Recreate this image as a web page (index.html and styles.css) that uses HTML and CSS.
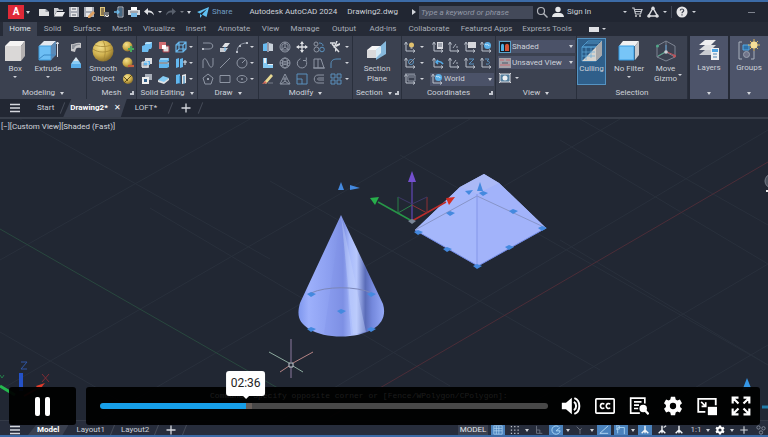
FILE: index.html
```html
<!DOCTYPE html>
<html lang="en">
<head>
<meta charset="utf-8">
<title>Autodesk AutoCAD 2024</title>
<link rel="stylesheet" href="styles.css">
</head>
<body>
<svg class="sprite" aria-hidden="true">
  <defs>
    <linearGradient id="coneFill" x1="0" x2="1" y1="0" y2="0">
      <stop offset="0" stop-color="#7f97ee"/><stop offset=".12" stop-color="#9db0fb"/><stop offset=".36" stop-color="#8c9ff0"/><stop offset=".52" stop-color="#7c8fe2"/><stop offset=".6" stop-color="#a9bbfb"/><stop offset=".68" stop-color="#b7c7fc"/><stop offset=".78" stop-color="#5a6cb8"/><stop offset=".86" stop-color="#7488dc"/><stop offset="1" stop-color="#94a8f6"/>
    </linearGradient>
    <radialGradient id="gold" cx=".38" cy=".3" r=".75"><stop offset="0" stop-color="#f3e08c"/><stop offset=".55" stop-color="#d0b14e"/><stop offset="1" stop-color="#856a26"/></radialGradient>
  </defs>
  <symbol id="menu" viewBox="0 0 12 12"><path d="M1 2.500h10M1 6h10M1 9.500h10" stroke="#d5d8de" stroke-width="1.300"/></symbol>
  <symbol id="plus" viewBox="0 0 12 12"><path d="M1.500 6h9M6 1.500v9" stroke="#d5d8de" stroke-width="1.300"/></symbol>
  <symbol id="new" viewBox="0 0 12 12"><path d="M1 3h6.500L11 6v4H1z" fill="#dedfe1"/><path d="M7.500 3v3H11" fill="#9b9fa8"/></symbol>
  <symbol id="open" viewBox="0 0 12 12"><path d="M1 10V2h4l1 1.500h4V5H4z" fill="#c9cbd0"/><path d="M3.500 6H12l-2.500 4.500H1z" fill="#eeeef0"/></symbol>
  <symbol id="save" viewBox="0 0 12 12"><path d="M1 1h10v10H1z" fill="#a9adb7"/><path d="M3 1h6v4H3zM3 7h6v4H3z" fill="#e5e5e7"/><path d="M4 3h4M4 9h4" stroke="#555b67"/></symbol>
  <symbol id="saveas" viewBox="0 0 12 12"><path d="M1 1h10v10H1z" fill="#a9adb7"/><path d="M3 1h6v4H3zM3 7h4v4H3z" fill="#e5e5e7"/><path d="m5 10 5-5 2 2-5 5H5z" fill="#e0a163"/></symbol>
  <symbol id="webopen" viewBox="0 0 12 12"><path d="M2 1h5v9H2z" fill="#dfc57a"/><path d="M3 2h3v7H3z" fill="#8b7750"/><path d="M6 6h5v5H6z" fill="#75777b"/><path d="m7 9 2 2 2-2" stroke="#eee" fill="none"/></symbol>
  <symbol id="websave" viewBox="0 0 12 12"><path d="M5 1h5v10H5z" fill="none" stroke="#b5c1d0"/><path d="M6 2h3v8H6z" fill="#486985"/><path d="M1 6h5M4 4l2 2-2 2" stroke="#6db8e6" fill="none" stroke-width="1.300"/></symbol>
  <symbol id="print" viewBox="0 0 12 12"><path d="M3 1h6v3H3z" fill="#fff"/><path d="M0 4h12v5H0z" fill="#d4d8dd"/><path d="M3 7h6v4H3z" fill="#79b9e6"/><path d="M2 6h8" stroke="#6c737f"/></symbol>
  <symbol id="undo" viewBox="0 0 12 12"><path d="M5 2 1 5.500l4 3.500V6.500c3 0 4 .5 6 3C10.500 5.500 8 4.500 5 4.500z" fill="#dfe1e5"/></symbol>
  <symbol id="redo" viewBox="0 0 12 12"><path d="m7 2 4 3.500L7 9V6.500c-3 0-4 .5-6 3C1.500 5.500 4 4.500 7 4.500z" fill="#59606d"/></symbol>
  <symbol id="send" viewBox="0 0 12 12"><path d="M12 1 0 6l3 1.500L10 3 5 8.500l4.500 2.500zM3 8v4l2-2.500z" fill="#5fc0f3"/></symbol>
  <symbol id="search" viewBox="0 0 12 12"><circle cx="5" cy="5" r="3.500" fill="none" stroke="#b2b5bc" stroke-width="1.200"/><path d="m7.500 7.500 4 4" stroke="#b2b5bc" stroke-width="1.400"/></symbol>
  <symbol id="user" viewBox="0 0 12 12"><circle cx="6" cy="3.500" r="2.700" fill="#e6e7e9"/><path d="M0 11c.5-3 2-4 4-4h4c2 0 3.500 1 4 4z" fill="#e6e7e9"/></symbol>
  <symbol id="cart" viewBox="0 0 12 12"><path d="M1 2h2l1.500 6h5L11 3.500H3.500M4 5.500h6.500" fill="none" stroke="#c1c4ca" stroke-width="1.200"/><circle cx="5" cy="10" r="1" fill="#ccc"/><circle cx="9" cy="10" r="1" fill="#ccc"/></symbol>
  <symbol id="apps" viewBox="0 0 12 12"><path d="M6 2 1.500 10h9z" fill="none" stroke="#dcdde0" stroke-width="1.500"/><circle cx="6" cy="2.200" r="1.700" fill="#dcdde0"/><circle cx="2" cy="10" r="1.700" fill="#dcdde0"/><circle cx="10" cy="10" r="1.700" fill="#dcdde0"/></symbol>
  <symbol id="help" viewBox="0 0 12 12"><circle cx="6" cy="6" r="5.500" fill="#e6e6e8"/><path d="M4.300 4.500c0-2 3.400-2 3.400 0 0 1.300-1.700 1.200-1.700 2.700M6 8.300v1.200" fill="none" stroke="#3f4552" stroke-width="1.200"/></symbol>

  <symbol id="box" viewBox="0 0 22 22"><path d="M1 6 6 1h15l-4 5z" fill="#f5f4f3"/><path d="M1 6h16v15H1z" fill="#dad8d7"/><path d="m17 6 4-5v15l-4 5z" fill="#b4b1b1"/></symbol>
  <symbol id="extrude" viewBox="0 0 22 22"><path d="m2 6 5-5h12l-5 5z" fill="#e4e8ee"/><path d="M2 6h12v14H2z" fill="#6dbef4" stroke="#429edc"/><path d="m14 6 5-5v14l-5 5z" fill="#5c8ab6"/><path d="m2 19 5-4h11" fill="none" stroke="#3c88c4"/><path d="M20.500 2v15M19 4l1.500-2L22 4" fill="none" stroke="#e1e3e8"/></symbol>
  <symbol id="surf" viewBox="0 0 12 12"><path d="M1 3c3 1 4-2 10-1v5c-5-1-5 0-6 4L1 10z" fill="#c8c8ca"/><path d="M2 4c3 0 4-2 8-1v1C6 4 5 5 4 8H2z" fill="#8f939c"/></symbol>
  <symbol id="press" viewBox="0 0 12 12"><path d="m6 0 3 4H7v3H5V4H3z" fill="#d9e5ed"/><path d="M1 7h10v4H1z" fill="#5aaeea"/><path d="m1 7 2-3h6l2 3z" fill="#8bcdf6"/></symbol>
  <symbol id="sphere" viewBox="0 0 22 22"><circle cx="11" cy="11" r="10.500" fill="url(#gold)"/><path d="M1 9c5 4 14 4 20 0M11 1c3 4 3 15 0 20M3 5c4 2 12 2 16 0" fill="none" stroke="#a48735" stroke-width=".8"/></symbol>
  <symbol id="ballplus" viewBox="0 0 12 12"><circle cx="5.500" cy="5.500" r="5" fill="url(#gold)"/><path d="M9 5v6M6 8h6" stroke="#47a75c" stroke-width="2"/></symbol>
  <symbol id="ballminus" viewBox="0 0 12 12"><circle cx="5.500" cy="5.500" r="5" fill="url(#gold)"/><path d="M6 9h6" stroke="#c45f3e" stroke-width="2.200"/></symbol>
  <symbol id="ballrefine" viewBox="0 0 12 12"><circle cx="6" cy="6" r="5" fill="url(#gold)"/><path d="m2 10 8-8M2 4l4 4" stroke="#61501c"/></symbol>

  <symbol id="union" viewBox="0 0 12 12"><path d="M1 5 4 4V2l2-1h5v5l-1 2H8l-1 3H1z" fill="#6dbcf0"/><path d="m4 2 2-1h5l-2 2H4z" fill="#b8e0f8"/></symbol>
  <symbol id="subtract" viewBox="0 0 12 12"><path d="M1 1h7v7H1z" fill="#cf6b70"/><path d="M5 5h6v6H5z" fill="#ddd" stroke="#a63b45"/><path d="M4 4h4v4H4z" fill="#fff"/></symbol>
  <symbol id="wirebox" viewBox="0 0 12 12"><path d="m1 4 3-3h7v7l-3 3H1zM1 4h7v7M8 4l3-3M4 1v7L1 11M4 8h7" fill="none" stroke="#69b7ec" stroke-width="1.200"/></symbol>
  <symbol id="intersect" viewBox="0 0 12 12"><path d="M4 1h7v6H4z" fill="#dedfe2"/><path d="M1 5h7v6H1z" fill="#a9b1bd"/><path d="M3 4h6v4H3z" fill="#62b5ed"/><path d="M1 5h6v5H1z" fill="none" stroke="#eee"/></symbol>
  <symbol id="slice" viewBox="0 0 12 12"><path d="m1 3 2-2h8v3l-2 1H1zM1 7h8l2-1v4l-2 1H1z" fill="#61b5ed"/><path d="M2 2h8M1 6h10" stroke="#deeff8"/></symbol>
  <symbol id="thicken" viewBox="0 0 12 12"><path d="M1 2 4 1v9l-3 1zM5 2l3-1v9l-3 1z" fill="#64b8ef"/><path d="M8 5h4M10 3v5" stroke="#dae7ef"/></symbol>
  <symbol id="interfere" viewBox="0 0 12 12"><path d="M4 1h7v6H4z" fill="#a8afba"/><path d="M1 4h7v7H1z" fill="#eee"/><path d="M3 6h3v3H3z" fill="#315f8a"/></symbol>
  <symbol id="offface" viewBox="0 0 12 12"><path d="m0 7 5-4 6 2-5 5z" fill="#85cbf4"/><path d="m0 7 6 2 5-4v2l-5 4-6-2z" fill="#e2e4e6"/></symbol>
  <symbol id="separate" viewBox="0 0 12 12"><path d="m1 2 4-1v9l-4 1z" fill="#62b7ee"/><path d="m7 2 4-1v9l-4 1z" fill="#e2e4e6"/><path d="M5 3v8M9 3v8" stroke="#247cb8"/></symbol>

  <symbol id="pline" viewBox="0 0 12 12"><path d="M1 2h6c5 0 5 6 0 6H1" class="ln"/><path d="M0 7h2v2H0z" fill="#b8bdc7"/></symbol>
  <symbol id="face" viewBox="0 0 12 12"><path d="m3 6 3-4h5L8 6z" fill="#dfe0e3"/><path d="M1 7h8l-3 4H1z" fill="#c7cad0"/><path d="M6 6v4" stroke="#66b8ef"/></symbol>
  <symbol id="arc" viewBox="0 0 12 12"><path d="M1 11C1 5 5 2 11 2" class="ln"/><path d="M0 10h2v2H0zM10 1h2v2h-2zM3 4h2v2H3z" fill="#b8bdc7"/></symbol>
  <symbol id="spline" viewBox="0 0 12 12"><path d="M1 11V4c0-3 3-3 4 0l2 4c1 3 4 3 4-1V1" class="ln"/></symbol>
  <symbol id="line" viewBox="0 0 12 12"><path d="M1 11 11 1" class="ln"/></symbol>
  <symbol id="circle" viewBox="0 0 12 12"><circle cx="6" cy="6" r="5" class="ln"/><path d="m6 6 3-3" class="ln"/></symbol>
  <symbol id="polygon" viewBox="0 0 12 12"><path d="m6 1 5 4-2 6H3L1 5z" class="ln"/><path d="M5 5h2v2H5z" fill="#9aa1ae"/></symbol>
  <symbol id="rect" viewBox="0 0 12 12"><path d="M1 2.500h10v7H1z" class="ln"/></symbol>
  <symbol id="ellipse" viewBox="0 0 12 12"><ellipse cx="6" cy="6" rx="5" ry="3.500" class="ln"/><path d="M5.500 5.500h1v1h-1z" class="ln"/></symbol>

  <symbol id="mirror3d" viewBox="0 0 12 12"><path d="m1 3 4-1v8H1z" fill="#68bbf1"/><path d="m7 2 4 1v7H7z" fill="#c9d1da"/><path d="M6 1v10" stroke="#eef"/></symbol>
  <symbol id="gizmo" viewBox="0 0 12 12"><circle cx="6" cy="6" r="5" class="ln"/><path d="M6 1v5l-4 3M6 6l4 3M3 4l3-2 3 2v5H3z" class="ln"/></symbol>
  <symbol id="move" viewBox="0 0 12 12"><path d="M6 1v10M1 6h10" stroke="#dfe1e5" stroke-width="1.300"/><path d="m6 0 2 3H4zM6 12l2-3H4zM0 6l3-2v4zM12 6 9 4v4z" fill="#dfe1e5"/></symbol>
  <symbol id="copy" viewBox="0 0 12 12"><circle cx="3" cy="3" r="2" class="ln"/><circle cx="3.500" cy="8.500" r="2.500" class="ln"/><path d="M6 2c3 0 4 1 4 3" class="lb"/><circle cx="9" cy="8.500" r="2.300" class="lb"/></symbol>
  <symbol id="trim" viewBox="0 0 12 12"><path d="M0 2h5M7 0 4 7M2 3l7 8" stroke="#dcdee2" stroke-width="1.500" fill="none"/><path d="m5 4 5-2v2L6 6zM5 7v4l2-2z" fill="#dcdee2"/></symbol>
  <symbol id="bracket" viewBox="0 0 12 12"><path d="M1 1h4v6h6v4H1z" fill="#83c8f2"/><path d="M2 1h2v5H2zM6 7h5v1H6z" fill="#e9eff4"/></symbol>
  <symbol id="rot3d" viewBox="0 0 12 12"><circle cx="6" cy="6" r="5" class="ln"/><ellipse cx="6" cy="6" rx="2.500" ry="5" class="ln"/><path d="M1 6h10M2 3c3 2 5 2 8 0M2 9c3-2 5-2 8 0" class="ln"/></symbol>
  <symbol id="rotate" viewBox="0 0 12 12"><path d="M4.500 1.800a4.700 4.700 0 1 0 5.500 2" class="ln"/><path d="M7 3.500h3.300V.5" class="ln"/></symbol>
  <symbol id="stretch" viewBox="0 0 12 12"><path d="M1 2h4v9H1zM5 2h3l3 9H5M0 11h12" class="ln"/></symbol>
  <symbol id="fillet" viewBox="0 0 12 12"><path d="M1 11V7c0-4 3-5 6-5h4" class="lb"/></symbol>
  <symbol id="erase" viewBox="0 0 12 12"><path d="m2 9 7-8 2 2-7 8z" fill="#e8d993"/><path d="m0 11 3-3 2 2z" fill="#db685a"/><path d="M6 10h5" stroke="#777d88"/></symbol>
  <symbol id="scale3d" viewBox="0 0 12 12"><path d="m6 1 5 10H1z" class="ln"/><path d="M6 4v4L2 11M6 8l4 3M4 6h4" class="ln"/></symbol>
  <symbol id="scale" viewBox="0 0 12 12"><path d="M1 1h10v10H1zM1 6h5v5" class="lb"/></symbol>
  <symbol id="offset" viewBox="0 0 12 12"><path d="M11 2H5C0 2 0 10 5 10h6M11 5H6c-2 0-2 2 0 2h5" class="ln"/></symbol>
  <symbol id="array" viewBox="0 0 12 12"><path d="M1 1h4v4H1zM7 1h4v4H7zM1 7h4v4H1zM7 7h4v4H7z" class="lb"/></symbol>
  <symbol id="section" viewBox="0 0 22 22"><path d="m1 10 5-4h9l-4 4z" fill="#f5f5f5"/><path d="M1 10h10v8H1z" fill="#d9d9db"/><path d="m10 10 10-9v13L10 20z" fill="#8fc7ec" opacity=".9"/><path d="m10 10 5-4v7l-5 5z" fill="#d7eaf5"/></symbol>

  <symbol id="ax" viewBox="0 0 12 12"><path d="M2 2v8h9M.500 3.500 2 1l1.500 2.500M9 8.500l2 1.500-2 1.500" fill="none" stroke="#bac0ca"/></symbol>
  <symbol id="axlight" viewBox="0 0 12 12"><use href="#ax"/><circle cx="7.500" cy="4" r="2.500" fill="#e0c16e"/><path d="M6.500 7h2" stroke="#ddd"/></symbol>
  <symbol id="axdoc" viewBox="0 0 12 12"><use href="#ax"/><path d="M5 1h6v7H5z" fill="#d9dbe0"/><path d="M6 3h4M6 5h4" stroke="#606878"/></symbol>
  <symbol id="axpt" viewBox="0 0 12 12"><use href="#ax"/><path d="m5 7 3-4M8 6h2" stroke="#a9b0bc"/></symbol>
  <symbol id="axview" viewBox="0 0 12 12"><use href="#ax"/><path d="M4 1h8v6H4z" fill="#d7d8dc"/></symbol>
  <symbol id="axglobe" viewBox="0 0 12 12"><use href="#ax"/><circle cx="7.500" cy="4.500" r="3.500" fill="#5bb0e9"/><path d="M5 3c2 2 3-1 4 2" stroke="#d9f0ff" fill="none"/></symbol>
  <symbol id="axobj" viewBox="0 0 12 12"><use href="#ax"/><circle cx="7" cy="5" r="2.500" class="lb"/><path d="m5 7 6-6" class="ln"/></symbol>
  <symbol id="axprev" viewBox="0 0 12 12"><use href="#ax"/><path d="M11 7C9 4 7 4 4 5M6 3 4 5l2 2" fill="none" stroke="#56adea" stroke-width="1.500"/></symbol>
  <symbol id="axz" viewBox="0 0 12 12"><use href="#ax"/><path d="M5 2h5L5 7h5" class="lb"/></symbol>
  <symbol id="ax3" viewBox="0 0 12 12"><use href="#ax"/><path d="M5 2h4L7 4c4 0 3 4-1 3" class="lb"/></symbol>
  <symbol id="axbox" viewBox="0 0 12 12"><use href="#ax"/><path d="M4 2h7v6H4zM1 1h10M5 4h5" class="ln"/></symbol>
  <symbol id="shade" viewBox="0 0 12 12"><path d="M0 0h12v12H0z" fill="#5aa2ca"/><path d="M1 1h10v10H1z" fill="#141821"/><path d="M2 10V5c0-3 3-3 3 0v5z" fill="#4fb0e5"/><path d="M6 10V5c0-3 4-3 4 0v5z" fill="#d15338"/></symbol>
  <symbol id="view" viewBox="0 0 12 12"><path d="M0 1h12v10H0z" fill="#a3a2a8"/><path d="M1 3h4M7 3h4M1 8h10" stroke="#c66b72"/><path d="M3 5h6v2H3z" fill="#777c87"/></symbol>
  <symbol id="viewport" viewBox="0 0 12 12"><path d="M1 2h10v8H1z" fill="#547f9e" stroke="#d9dce1"/><circle cx="6" cy="6" r="2.500" fill="#eff1f3"/><path d="m0 1 2 2M12 1l-2 2M0 11l2-2M12 11l-2-2" stroke="#d9dce1"/></symbol>

  <symbol id="culling" viewBox="0 0 22 22"><path d="m1 7 6-6h14l-6 6zM1 7h14v14H1z" fill="#2b5c88" stroke="#55a3d7" stroke-width=".8"/><path d="M15 7v14H1zM15 7l6-6v14l-6 6z" fill="#d5d3ce"/><path d="M5 7v13M10 7v11M1 12h13M1 16h13M5 3h13" stroke="#62a9d8" stroke-width=".7"/><path d="m15 7 6-6v14l-6 6z" fill="#a7a8aa"/></symbol>
  <symbol id="nofilter" viewBox="0 0 22 22"><path d="m1 6 4-5h16l-4 5z" fill="#f0f1f2"/><path d="M1 6h15v14H1z" fill="#77c5f7" stroke="#369be1"/><path d="m17 6 4-5v14l-4 5z" fill="#c7c8cb"/></symbol>
  <symbol id="movegizmo" viewBox="0 0 22 22"><path d="m11 1 9 5v11l-9 4-9-4V6zM11 1v11L2 17M11 12l9 5" fill="none" stroke="#7d8492"/><path d="M11 11v-6" stroke="#5d9bd0"/><path d="m12 12 7 3" stroke="#c1535a"/><path d="m10 12-7 4" stroke="#52a98a"/><circle cx="11" cy="12" r="1.800" fill="#cbced4"/><circle cx="2.500" cy="6" r="1.500" fill="#52a98a"/><circle cx="19.500" cy="16" r="1.500" fill="#c1535a"/></symbol>
  <symbol id="layers" viewBox="0 0 22 22"><path d="m1 6 6-5h11l-5 5z" fill="#efeff0"/><path d="m1 11 6-5h11l-5 5z" fill="#dedfe1"/><path d="m1 16 6-5h11l-5 5z" fill="#c9cbd1"/><path d="M13 9h8v12h-8z" fill="#f0f0f2"/><path d="M14 10h6v3h-6z" fill="#4ba4e5"/><path d="M15 15h4M15 18h4" stroke="#4e84b4"/></symbol>
  <symbol id="groups" viewBox="0 0 22 22"><path d="M4 3H1v17h3M13 20h3v-8" fill="none" stroke="#a8afbb"/><path d="M5 6h6v5H5z" fill="#2f70a6" stroke="#54a9e5"/><circle cx="8.500" cy="15.500" r="3" fill="#71748a" stroke="#9aa2b0"/><path d="M16 0v12M10 6h12M12 2l8 8M20 2l-8 8" stroke="#e2b85b"/><circle cx="16" cy="6" r="3.500" fill="#f5dd98"/></symbol>

  <symbol id="s-grid" viewBox="0 0 12 12"><path d="M1 1h10v10H1zM1 4h10M1 7h10M4 1v10M7 1v10" fill="none" stroke="#b9dcf8" stroke-width=".8"/></symbol>
  <symbol id="s-dots" viewBox="0 0 12 12"><path d="M1 2h10M1 6h10M1 10h10" stroke="#c4c8d0" stroke-width="1.500" stroke-dasharray="1.500 2.500"/></symbol>
  <symbol id="s-ortho" viewBox="0 0 12 12"><path d="M3 1v9h7M3 6h4v4" fill="none" stroke="#737a88"/></symbol>
  <symbol id="s-polar" viewBox="0 0 12 12"><path d="M9 2a5 5 0 1 0 2 5H6l5-4" fill="none" stroke="#a6d3f4" stroke-width="1.200"/></symbol>
  <symbol id="s-iso" viewBox="0 0 12 12"><path d="m2 2 4 4v5M6 6l2-2" fill="none" stroke="#737a88"/></symbol>
  <symbol id="s-track" viewBox="0 0 12 12"><path d="M11 1 1 10h10" fill="none" stroke="#c1e1f8"/></symbol>
  <symbol id="s-snap" viewBox="0 0 12 12"><path d="M2 3h8v8M2 3v7M0 1h4v4H0z" fill="none" stroke="#b2daf7"/></symbol>
  <symbol id="s-ann" viewBox="0 0 12 12"><path d="M6 1v5l-4 4M6 6l4 4M6 5v5" fill="none" stroke="#f0f3f6" stroke-width="1.700"/></symbol>
  <symbol id="s-ann2" viewBox="0 0 12 12"><use href="#s-ann"/><path d="m8 3 3-2" stroke="#e0e3e8" stroke-width="1.500"/></symbol>
  <symbol id="s-iso2" viewBox="0 0 12 12"><circle cx="3" cy="3" r="2" class="ln"/><circle cx="9" cy="4" r="2" class="ln"/><circle cx="6" cy="9" r="2" class="ln"/></symbol>
  <symbol id="gear" viewBox="0 0 24 24"><path fill-rule="evenodd" d="M9.500 1h5l.7 3.100 2 1.200 3.100-1 2.500 4.300-2.300 2.200v2.400l2.300 2.200-2.500 4.300-3.100-1-2 1.200-.7 3.100h-5l-.7-3.100-2-1.200-3.100 1-2.500-4.300 2.300-2.200v-2.400L1.200 8.600l2.500-4.300 3.100 1 2-1.200zM12 8.200a3.800 3.800 0 1 0 0 7.600 3.800 3.800 0 0 0 0-7.600z" fill="#fff"/></symbol>

  <symbol id="p-vol" viewBox="0 0 24 24"><path d="M1 8v8h5l7 6V2L6 8z" fill="#fff"/><path d="M15.500 7c3.500 2 3.500 8 0 10" fill="none" stroke="#fff" stroke-width="2.400"/><path d="M16 2.500c8 3 8 16 0 19" fill="none" stroke="#fff" stroke-width="2.400"/></symbol>
  <symbol id="p-cc" viewBox="0 0 24 24"><rect x="1" y="3.500" width="22" height="17" rx="1" fill="none" stroke="#fff" stroke-width="2"/><path d="M11 10c-1-1.700-4.500-1.200-4.500 2s3.500 3.700 4.500 2M18 10c-1-1.700-4.500-1.200-4.500 2s3.500 3.700 4.500 2" fill="none" stroke="#fff" stroke-width="2"/></symbol>
  <symbol id="p-script" viewBox="0 0 24 24"><path d="M19 9V2.500H2v18h11M6 7h9M6 11h6M6 15h5" fill="none" stroke="#fff" stroke-width="2"/><circle cx="17" cy="15" r="4.500" fill="#fff"/><path d="m19 17 4.500 5" stroke="#fff" stroke-width="2.800"/></symbol>
  <symbol id="p-pip" viewBox="0 0 24 24"><path d="M10 19H1.500V3.500h21V11" fill="none" stroke="#fff" stroke-width="2.200"/><path d="M13 13h11v10H13z" fill="#fff"/><path d="m5 7 5 5M10.500 7.500v5h-5" fill="none" stroke="#fff" stroke-width="2"/></symbol>
  <symbol id="p-full" viewBox="0 0 24 24"><path d="M2 9V2h7M15 2h7v7M22 15v7h-7M9 22H2v-7M2 2l7 7M22 2l-7 7M22 22l-7-7M2 22l7-7" fill="none" stroke="#fff" stroke-width="2.600"/></symbol>
</svg>

<div class="app">
  <header class="titlebar">
    <button class="app-button" aria-label="Application menu">A</button><i class="caret"></i>
    <nav class="quick" aria-label="Quick access">
      <button aria-label="New"><svg><use href="#new"/></svg></button>
      <button aria-label="Open"><svg><use href="#open"/></svg></button>
      <button aria-label="Save"><svg><use href="#save"/></svg></button>
      <button aria-label="Save as"><svg><use href="#saveas"/></svg></button>
      <button aria-label="Open from web"><svg><use href="#webopen"/></svg></button>
      <button aria-label="Save to web"><svg><use href="#websave"/></svg></button>
      <button aria-label="Plot"><svg><use href="#print"/></svg></button>
      <button aria-label="Undo"><svg><use href="#undo"/></svg></button><i class="caret small"></i>
      <button aria-label="Redo"><svg><use href="#redo"/></svg></button><i class="caret small dim"></i>
      <i class="caret"></i>
    </nav>
    <button class="share"><svg><use href="#send"/></svg>Share</button>
    <div class="doc-title"><span>Autodesk AutoCAD 2024</span><span>Drawing2.dwg</span></div>
    <i class="caret right"></i>
    <input class="search" type="search" placeholder="Type a keyword or phrase" aria-label="Search">
    <div class="account">
      <button aria-label="Search"><svg><use href="#search"/></svg></button>
      <button><svg><use href="#user"/></svg>Sign In</button>
    </div>
    <div class="account end">
      <i class="caret small"></i>
      <button aria-label="App store"><svg><use href="#cart"/></svg></button>
      <button aria-label="Autodesk apps"><svg><use href="#apps"/></svg></button>
      <i class="caret small"></i>
      <span class="rule"></span>
      <button aria-label="Help"><svg><use href="#help"/></svg></button>
      <i class="caret small"></i>
    </div>
    <button class="minimize" aria-label="Minimize"></button>
  </header>

  <nav class="tabs" aria-label="Ribbon">
    <button class="active">Home</button><button>Solid</button><button>Surface</button><button>Mesh</button><button>Visualize</button><button>Insert</button><button>Annotate</button><button>View</button><button>Manage</button><button>Output</button><button>Add-ins</button><button>Collaborate</button><button>Featured Apps</button><button>Express Tools</button>
    <button class="ribbon-toggle" aria-label="Ribbon display"><span></span><i class="caret small"></i></button>
  </nav>

  <div class="ribbon">
    <section class="panel">
      <div class="body">
        <button class="big"><svg><use href="#box"/></svg>Box<i class="caret small"></i></button>
        <button class="big"><svg><use href="#extrude"/></svg>Extrude<i class="caret small"></i></button>
        <div class="tools one"><button aria-label="Polysolid"><svg><use href="#surf"/></svg></button><button aria-label="Presspull"><svg><use href="#press"/></svg></button></div>
      </div>
      <h2>Modeling<i class="caret"></i></h2>
    </section>
    <section class="panel">
      <div class="body">
        <button class="big"><svg><use href="#sphere"/></svg>Smooth<br>Object</button>
        <div class="tools one"><button aria-label="Smooth more"><svg><use href="#ballplus"/></svg></button><button aria-label="Smooth less"><svg><use href="#ballminus"/></svg></button><button aria-label="Refine mesh"><svg><use href="#ballrefine"/></svg></button></div>
      </div>
      <h2>Mesh<i class="launcher"></i></h2>
    </section>
    <section class="panel">
      <div class="body">
        <div class="tools">
          <button aria-label="Union"><svg><use href="#union"/></svg></button><button aria-label="Subtract"><svg><use href="#subtract"/></svg></button><button aria-label="Extract edges"><svg><use href="#wirebox"/></svg></button><i class="caret small"></i>
          <button aria-label="Intersect"><svg><use href="#intersect"/></svg></button><button aria-label="Slice"><svg><use href="#slice"/></svg></button><button aria-label="Thicken"><svg><use href="#thicken"/></svg></button><i class="caret small"></i>
          <button aria-label="Interfere"><svg><use href="#interfere"/></svg></button><button aria-label="Offset edge"><svg><use href="#offface"/></svg></button><button aria-label="Separate"><svg><use href="#separate"/></svg></button><i class="caret small"></i>
        </div>
      </div>
      <h2>Solid Editing<i class="caret"></i></h2>
    </section>
    <section class="panel">
      <div class="body">
        <div class="tools">
          <button aria-label="Polyline"><svg><use href="#pline"/></svg></button><button aria-label="3D face"><svg><use href="#face"/></svg></button><button aria-label="Arc"><svg><use href="#arc"/></svg></button><i class="caret small"></i>
          <button aria-label="Spline"><svg><use href="#spline"/></svg></button><button aria-label="Line"><svg><use href="#line"/></svg></button><button aria-label="Circle"><svg><use href="#circle"/></svg></button><i class="caret small"></i>
          <button aria-label="Polygon"><svg><use href="#polygon"/></svg></button><button aria-label="Rectangle"><svg><use href="#rect"/></svg></button><button aria-label="Ellipse"><svg><use href="#ellipse"/></svg></button><i class="caret small"></i>
        </div>
      </div>
      <h2>Draw<i class="caret"></i></h2>
    </section>
    <section class="panel">
      <div class="body">
        <div class="tools five">
          <button aria-label="3D mirror"><svg><use href="#mirror3d"/></svg></button><button aria-label="3D move"><svg><use href="#gizmo"/></svg></button><button aria-label="Move"><svg><use href="#move"/></svg></button><button aria-label="Copy"><svg><use href="#copy"/></svg></button><button aria-label="Trim"><svg><use href="#trim"/></svg></button><i class="caret small"></i>
          <button aria-label="3D align"><svg><use href="#bracket"/></svg></button><button aria-label="3D rotate"><svg><use href="#rot3d"/></svg></button><button aria-label="Rotate"><svg><use href="#rotate"/></svg></button><button aria-label="Stretch"><svg><use href="#stretch"/></svg></button><button aria-label="Fillet"><svg><use href="#fillet"/></svg></button><i class="caret small"></i>
          <button aria-label="Erase"><svg><use href="#erase"/></svg></button><button aria-label="3D scale"><svg><use href="#scale3d"/></svg></button><button aria-label="Scale"><svg><use href="#scale"/></svg></button><button aria-label="Offset"><svg><use href="#offset"/></svg></button><button aria-label="Array"><svg><use href="#array"/></svg></button><i class="caret small"></i>
        </div>
      </div>
      <h2>Modify<i class="caret"></i></h2>
    </section>
    <section class="panel">
      <div class="body"><button class="big"><svg><use href="#section"/></svg>Section<br>Plane</button></div>
      <h2 class="with-launcher">Section<i class="caret"></i><i class="launcher"></i></h2>
    </section>
    <section class="panel">
      <div class="body">
        <div class="tools coords">
          <button aria-label="UCS icon"><svg><use href="#axlight"/></svg></button><i class="caret small"></i><button aria-label="UCS"><svg><use href="#axdoc"/></svg></button><button aria-label="Origin"><svg><use href="#axpt"/></svg></button><button aria-label="View UCS"><svg><use href="#axview"/></svg></button><button aria-label="World UCS"><svg><use href="#axglobe"/></svg></button>
          <button aria-label="Object UCS"><svg><use href="#axobj"/></svg></button><i class="caret small"></i><button aria-label="Previous UCS"><svg><use href="#axprev"/></svg></button><button aria-label="Z-axis vector"><svg><use href="#axpt"/></svg></button><button aria-label="Z rotate"><svg><use href="#axz"/></svg></button><button aria-label="3 point"><svg><use href="#ax3"/></svg></button>
          <button aria-label="Face UCS"><svg><use href="#axbox"/></svg></button><i class="caret small"></i>
          <div class="pick"><svg><use href="#axglobe"/></svg><select aria-label="Named UCS"><option>World</option></select><i class="caret"></i></div>
        </div>
      </div>
      <h2>Coordinates<i class="launcher"></i></h2>
    </section>
    <section class="panel">
      <div class="body stack">
        <div class="pick"><svg><use href="#shade"/></svg><select aria-label="Visual style"><option>Shaded</option></select><i class="caret"></i></div>
        <div class="pick"><svg><use href="#view"/></svg><select aria-label="Named view"><option>Unsaved View</option></select><i class="caret"></i></div>
        <button class="viewport-btn" aria-label="Viewport"><svg><use href="#viewport"/></svg><i class="caret small"></i></button>
      </div>
      <h2>View<i class="caret"></i></h2>
    </section>
    <section class="panel">
      <div class="body thirds">
        <button class="big on"><svg><use href="#culling"/></svg>Culling</button>
        <button class="big"><svg><use href="#nofilter"/></svg>No Filter<i class="caret small"></i></button>
        <div class="gizmo"><button class="big"><svg><use href="#movegizmo"/></svg>Move<br>Gizmo</button><i class="caret small"></i></div>
      </div>
      <h2>Selection</h2>
    </section>
    <section class="panel light">
      <div class="body"><button class="big"><svg><use href="#layers"/></svg>Layers</button></div>
      <h2><i class="caret"></i></h2>
    </section>
    <section class="panel light">
      <div class="body"><button class="big"><svg><use href="#groups"/></svg>Groups</button></div>
      <h2><i class="caret"></i></h2>
    </section>
  </div>

  <nav class="files" aria-label="Drawings">
    <button aria-label="Menu"><svg><use href="#menu"/></svg></button>
    <button class="file first">Start</button>
    <button class="file active">Drawing2* <span>✕</span></button>
    <button class="file">LOFT*</button>
    <button class="file add" aria-label="New drawing"><svg><use href="#plus"/></svg></button>
  </nav>

  <main class="viewport">
    <p class="view-label">[−][Custom View][Shaded (Fast)]</p>
    <svg class="scene" viewBox="0 119 768 301" preserveAspectRatio="xMidYMid slice" role="img" aria-label="Cone and pyramid">
      <g stroke="#29303c" fill="none">
        <path d="M270 181 600 370M400 155l368 210M0 332l130 75M150 208l300 178M580 119l188 106M560 140l208 124M560 240l208 125M20 119l250 140"/>
        <path d="M0 390 470 119M100 420 620 119M280 420 768 130M520 410 768 264M0 260 250 119M640 420l128-75"/>
      </g>
      <path d="M0 229 290 395" stroke="#29483f"/>
      <path d="M330 417 768 162" stroke="#4c2d38"/>
      <path d="M341 215 300 303c-4 14 0 20 9 26 16 10 48 10 64 0 10-6 13-15 10-25z" fill="url(#coneFill)"/>
      <path d="m341 215-17 119c10 2 20 2 27 1z" fill="#8093e8" opacity=".35"/>
      <path d="m341 215 12 119 13-2z" fill="#c4d3fc" opacity=".4"/>
      <path d="M311 293c15-7 45-7 61 0" fill="none" stroke="#7b86b8"/>
      <path d="m484 174 15 9 47 45-68 38-63-36 45-43z" fill="#9fb1fa"/>
      <path d="m477 194 1 72-63-36 45-43z" fill="#a5b7fb"/>
      <path d="m477 194 1 72 68-38-47-45z" fill="#a2b3fa"/>
      <path d="m460 187 24-13 15 9-22 11z" fill="#abb9f6"/>
      <path d="M415 230l62-34 69 32" fill="none" stroke="#8794c8"/>
      <path d="M477 194v72" stroke="#8395e8"/>
      <path d="M415 230l63 36 68-38" fill="none" stroke="#6f87df"/>
      <path d="M412 221v-40" stroke="#55419c" stroke-width="1.500"/><path d="m412 171 4 11h-8z" fill="#7450ce"/>
      <path d="m412 221-34-19" stroke="#279648" stroke-width="1.500"/><path d="m370 198 9-1-4 8z" fill="#27af4b"/>
      <path d="m412 221 34-19" stroke="#bd2b2b" stroke-width="1.500"/><path d="m455 197-9 1 3 7z" fill="#d62d22"/>
      <path d="M398 213v-16M398 213l14-8" stroke="#2b8149" fill="none"/><path d="M427 213v-16M427 213l-15-8" stroke="#8d3035" fill="none"/>
      <path d="m398 197 14 7 15-7" stroke="#3d3868" fill="none"/>
      <path d="m408 221 4-2 4 2-4 3z" fill="#7a8698"/>
      <g fill="#4489df">
        <path d="m341 182 3 8h-6zM350 185l10 3-10 2zM480 182l3 9h-6zM465 191l8-1-4 5z"/>
        <path id="grip" d="m307 294 4-2 5 2-5 3z"/>
        <use href="#grip" x="60"/><use href="#grip" x="30" y="17"/><use href="#grip" y="35"/><use href="#grip" x="60" y="35"/>
        <use href="#grip" x="107" y="-62"/><use href="#grip" x="136" y="-45"/><use href="#grip" x="166" y="-28"/><use href="#grip" x="198" y="-47"/><use href="#grip" x="231" y="-66"/><use href="#grip" x="202" y="-83"/><use href="#grip" x="172" y="-101"/><use href="#grip" x="139" y="-81"/>
      </g>
      <path d="M291 339v23M291 367v11" stroke="#8d7ba0"/><path d="m269 352 20 11M293 366l10 6" stroke="#8ba99d"/><path d="m313 352-20 11M289 366l-9 6" stroke="#b58384"/><path d="M289 363h4v4h-4z" fill="none" stroke="#c5cad2"/>
      <path d="M21 391v-18" stroke="#2452c8" stroke-width="4"/><path d="m0 386 15 9" stroke="#24b84e" stroke-width="3"/><path d="m24 396 18-10" stroke="#bd2a26" stroke-width="2"/><path d="m45 383-6 7-3-4z" fill="#e23c2b"/>
      <g fill="none"><path d="M21 362h6l-6 7h6" stroke="#3057a7"/><path d="m42 374 7 8M49 374l-7 8" stroke="#7e2b33"/><path d="m0 375 2 3 2-3" stroke="#23804a"/></g>
      <path d="m747 378 4 10-9 3z" fill="#3597e6"/><path d="M762 407h6" stroke="#207ba9" stroke-width="3"/>
      <circle cx="772" cy="181" r="7" fill="#4b515d" stroke="#747b86"/><path d="M766 191h2" stroke="#eee" stroke-width="2"/>
    </svg>
  </main>

  <footer class="status">
    <button aria-label="Layouts"><svg><use href="#menu"/></svg></button>
    <button class="file active">Model</button>
    <button class="file">Layout1</button>
    <button class="file">Layout2</button>
    <button class="file add" aria-label="New layout"><svg><use href="#plus"/></svg></button>
    <div class="modes">
      <button class="model">MODEL</button>
      <button class="on" aria-label="Grid"><svg><use href="#s-grid"/></svg></button>
      <button aria-label="Snap"><svg><use href="#s-dots"/></svg></button><i class="caret"></i>
      <button aria-label="Ortho"><svg><use href="#s-ortho"/></svg></button>
      <button class="on" aria-label="Polar"><svg><use href="#s-polar"/></svg></button><i class="caret"></i>
      <button aria-label="Isodraft"><svg><use href="#s-iso"/></svg></button><i class="caret"></i>
      <button class="on" aria-label="Tracking"><svg><use href="#s-track"/></svg></button>
      <button class="on" aria-label="Object snap"><svg><use href="#s-snap"/></svg></button><i class="caret"></i>
      <button class="on" aria-label="Annotation"><svg><use href="#s-ann"/></svg></button>
      <button aria-label="Auto scale"><svg><use href="#s-ann2"/></svg></button>
      <button aria-label="Annotation scale"><svg><use href="#s-ann"/></svg></button>
      <button class="scale">1:1</button><i class="caret"></i>
      <button aria-label="Workspace"><svg><use href="#gear"/></svg></button><i class="caret"></i>
      <button aria-label="Monitor"><svg><use href="#plus"/></svg></button>
      <button aria-label="Isolate"><svg><use href="#s-iso2"/></svg></button>
    </div>
  </footer>

  <div class="player">
    <button class="pause" aria-label="Pause"><span></span><span></span></button>
    <div class="controls">
      <p class="command">Command: Specify opposite corner or [Fence/WPolygon/CPolygon]:</p>
      <div class="seek" style="--at: 32.5%">
        <input type="range" min="0" max="480" value="156" aria-label="Seek">
        <output>02:36</output>
      </div>
      <button aria-label="Volume"><svg><use href="#p-vol"/></svg></button>
      <button aria-label="Captions"><svg><use href="#p-cc"/></svg></button>
      <button aria-label="Transcript"><svg><use href="#p-script"/></svg></button>
      <button aria-label="Settings"><svg><use href="#gear"/></svg></button>
      <button aria-label="Picture in picture"><svg><use href="#p-pip"/></svg></button>
      <button aria-label="Full screen"><svg><use href="#p-full"/></svg></button>
    </div>
  </div>
</div>
</body>
</html>
```

FILE: styles.css
```css
* { box-sizing: border-box; }
body { margin: 0; background: #212733; color: #cdd1d9; font: 8px/10px Roboto, "Open Sans", sans-serif; }
button, input, select { font: inherit; color: inherit; background: none; border: 0; padding: 0; margin: 0; }
button { display: flex; align-items: center; justify-content: center; white-space: nowrap; }
svg { display: block; flex: none; width: 12px; height: 12px; }
h2, p { margin: 0; font: inherit; }
.sprite { position: absolute; width: 0; height: 0; }
.ln { fill: none; stroke: #8e95a3; stroke-width: 1; }
.lb { fill: none; stroke: #5a91bd; stroke-width: 1; }

.caret { flex: none; width: 0; height: 0; border: 2px solid transparent; border-top: 3px solid #d1d4da; border-bottom: 0; }
.caret.small { border-width: 2px; border-top-width: 2px; border-bottom: 0; }
.caret.right { border: 3px solid transparent; border-left: 4px solid #d1d4da; border-right: 0; }
.dim { opacity: .5; }

.app { position: relative; display: flex; flex-direction: column; height: 100vh; overflow: hidden; border-top: 2px solid #3c6ba7; border-bottom: 2px solid #3c6ba7; }

.titlebar { display: flex; align-items: center; height: 20px; padding: 0 8px; background: #212632; }
.app-button { width: 16px; height: 14px; margin-right: 2px; background: #df2937; color: #fff; font-weight: 700; font-size: 10px; }
.quick { display: flex; align-items: center; gap: 3px; margin-left: 8px; }
.share { gap: 3px; margin-left: 6px; color: #6f9bc0; }
.doc-title { display: flex; gap: 10px; margin: 0 14px 0 17px; white-space: nowrap; }
.search { flex: 1; min-width: 80px; max-width: 114px; height: 13px; margin-left: 3px; padding: 0 2px; background: #434959; outline: 0; }
.search::placeholder { color: #9298a6; font-style: italic; opacity: 1; }
.account { display: flex; align-items: center; gap: 4px; margin-left: 3px; }
.account button { gap: 3px; }
.account.end { margin-left: auto; gap: 4px; }
.rule { width: 1px; height: 12px; background: #424855; }
.minimize { width: 7px; height: 1px; margin: 0 5px 0 52px; background: #7e838e; }

.tabs { display: grid; grid-template-columns: 34fr 31fr 38fr 32fr 42fr 32fr 44fr 29fr 40fr 38fr 40fr 52fr 63fr 58fr 192fr; height: 14px; padding-left: 3px; background: #262b37; color: #a9aeb8; }
.tabs .active { background: #3b4150; color: #dfe1e6; }
.ribbon-toggle { justify-content: flex-start; gap: 3px; padding-left: 13px; }
.ribbon-toggle span { width: 10px; height: 5px; background: #dfe0e4; }

.ribbon { display: grid; grid-template-columns: 87fr 50fr 61fr 61fr 94fr 49fr 94fr 81fr 111fr 40fr 40fr; height: 63px; background: #242936; }
.panel { display: flex; flex-direction: column; min-width: 0; background: #3b4150; border-right: 1px solid #292f3c; }
.body { display: flex; flex: 1; justify-content: space-around; align-items: flex-start; padding-top: 3px; }
.panel h2 { position: relative; display: flex; align-items: center; justify-content: center; gap: 5px; height: 12px; white-space: nowrap; }
.panel .with-launcher { justify-content: flex-start; padding-left: 3px; }
.launcher { position: absolute; right: 2px; width: 4px; height: 4px; border-right: 2px solid #c1c5cd; border-bottom: 2px solid #c1c5cd; }
.big { flex-direction: column; padding: 1px; line-height: 10px; }
.big svg { width: 22px; height: 22px; margin-bottom: 2px; }
.big .caret { margin-top: 2px; }
.on { background: #2f5f8a; }
.big.on { width: 27px; padding-bottom: 10px; outline: 1px solid #5593c2; }
.thirds { justify-content: space-between; padding-left: 1px; padding-right: 5px; }
.gizmo { display: flex; align-items: flex-end; }
.gizmo .caret { margin-bottom: 9px; }
.tools { display: grid; grid-template-columns: repeat(3, 17px) 7px; grid-auto-rows: 16px; align-items: center; }
.tools.one { grid-template-columns: 14px; }
.tools.five { grid-template-columns: repeat(5, 17px) 7px; }
.tools.coords { grid-template-columns: 14px 13px repeat(4, 16px); }
.coords .caret { margin-left: 3px; }
.coords .pick { grid-column: span 4; }
.pick { display: flex; align-items: center; gap: 1px; height: 13px; padding: 0 2px 0 1px; background: #4b5268; }
.pick select { flex: 1; min-width: 0; appearance: none; outline: 0; }
.pick .caret { pointer-events: none; }
.stack { flex-direction: column; justify-content: flex-start; align-items: stretch; gap: 3px; padding: 4px 1px 0 2px; }
.viewport-btn { align-self: flex-start; gap: 4px; padding-left: 1px; }
.light { background: #4d546a; border-left: 2px solid #262b37; border-right: 0; }
.light .big { padding-top: 0; }

.files { display: flex; align-items: stretch; height: 18px; padding-left: 9px; background: #222733; }
.file { position: relative; padding: 0 14px 0 8px; }
.file::after { content: ""; position: absolute; right: 0; width: 1px; height: 12px; background: #454b58; transform: rotate(22deg); }
.file.first { padding: 0 9px 0 16px; }
.files .active { padding: 0 6px 0 7px; }
.files .add { padding: 0 9px; }
.files .active, .status .active { color: #fff; font-weight: 700; background: #3b4150; clip-path: polygon(8px 0, 100% 0, calc(100% - 6px) 100%, 0 100%); }
.file span { margin-left: 6px; font-weight: 400; }

.viewport { position: relative; flex: 1; min-height: 0; border-top: 2px solid #383e4a; background: #212733; }
.scene { position: absolute; inset: 0; width: 100%; height: 100%; }
.view-label { position: relative; z-index: 1; padding: 3px 1px; color: #d2d6dc; }

.status { display: flex; align-items: stretch; height: 15px; padding: 4px 0 0 9px; background: #272d3c; border-top: 1px solid #343a47; }
.status > .file { padding: 0 8px; }
.status > .active { padding: 0 9px; margin-left: 7px; }
.modes { display: flex; align-items: center; justify-content: flex-end; gap: 3px; margin-left: auto; }
.modes button { width: 14px; height: 10px; }
.modes svg { width: 10px; height: 10px; }
.modes .on { background: #4a82bd; }
.modes .model { width: 30px; background: #3b4150; color: #e2e5ea; }

.player { position: absolute; left: 9px; right: 8px; bottom: 10px; display: flex; gap: 10px; height: 38px; }
.pause, .controls { background: rgb(0 0 0 / .95); border-radius: 3px; }
.pause { width: 67px; gap: 5px; }
.pause span { width: 5px; height: 19px; border-radius: 2px; background: #fff; }
.controls { position: relative; display: flex; align-items: center; flex: 1; padding: 0 2px 0 14px; }
.controls > button { width: 34px; height: 38px; }
.controls > button svg { width: 20px; height: 20px; }
.command { position: absolute; left: 124px; top: 4px; color: #1d1d1d; font: 8px/10px "Liberation Mono", monospace; white-space: nowrap; }
.seek { position: relative; display: flex; align-items: center; flex: 1; margin-right: 6px; }
.seek input { width: 100%; height: 6px; appearance: none; border-radius: 3px; background: linear-gradient(90deg, #179fe8 var(--at), #695f5a var(--at), #695f5a calc(var(--at) + 6px), #484848 calc(var(--at) + 6px)); }
.seek input::-webkit-slider-thumb { appearance: none; width: 1px; height: 1px; }
.seek output { position: absolute; left: var(--at); bottom: 13px; padding: 4px 5px; border-radius: 3px; background: #fff; color: #222; font: 12px/17px Roboto, sans-serif; transform: translateX(-50%); }
.seek output::after { content: ""; position: absolute; left: 50%; top: 100%; border: 3px solid transparent; border-top-color: #fff; transform: translateX(-50%); }
```
